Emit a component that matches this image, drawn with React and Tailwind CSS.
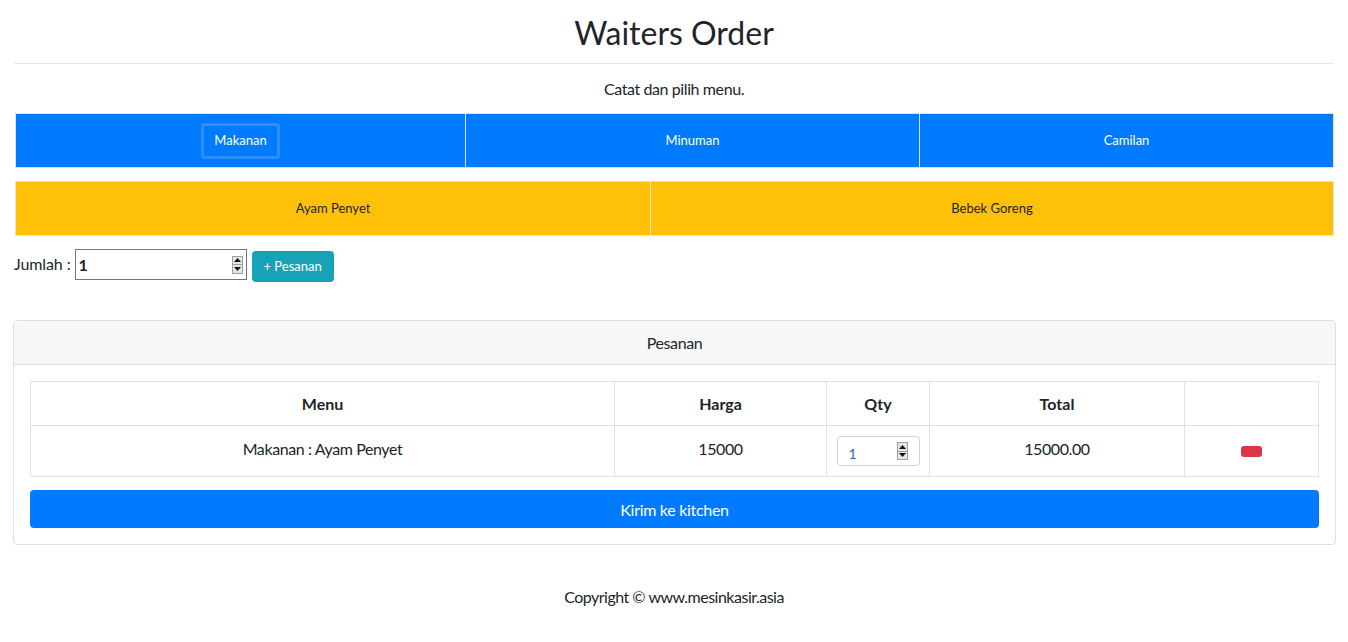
import React from "react";

function Spinner() {
  return (
    <div className="flex flex-col w-[11px] h-[18px] border border-[#a0a0a0] bg-[#e6e6e6]">
      <div className="flex-1 flex items-center justify-center border-b border-[#a0a0a0]">
        <svg width="7" height="4" viewBox="0 0 7 4"><polygon points="3.5,0 7,4 0,4" fill="#111" /></svg>
      </div>
      <div className="flex-1 flex items-center justify-center">
        <svg width="7" height="4" viewBox="0 0 7 4"><polygon points="0,0 7,0 3.5,4" fill="#111" /></svg>
      </div>
    </div>
  );
}

export default function App() {
  const font = { fontFamily: "Lato, 'Open Sans', sans-serif" };
  return (
    <div className="px-[14px] text-[#212529] bg-white min-h-[642px]" style={font}>
      <h2 className="text-center text-[32px] leading-[38px] pt-[14px] pb-[11px] font-normal">Waiters Order</h2>
      <div className="border-t border-[#e5e5e5]" />
      <p className="text-center text-[16px] leading-[24px] mt-[13px] tracking-[-0.4px]">Catat dan pilih menu.</p>
      <div className="mt-[12px] ml-[1px] flex h-[55px] border border-[#dee2e6] bg-[#007bff] text-white text-[13px]">
        <div className="w-[449px] flex items-center justify-center">
          <div className="px-[10px] h-[36px] flex items-center border-[3px] border-[#2e8fff] rounded-[4px]">Makanan</div>
        </div>
        <div className="w-[454px] flex items-center justify-center border-l border-[#dbe9ff]">Minuman</div>
        <div className="flex-1 flex items-center justify-center border-l border-[#dbe9ff]">Camilan</div>
      </div>
      <div className="mt-[13px] ml-[1px] flex h-[55px] border border-[#dee2e6] bg-[#ffc107] text-[#212529] text-[13px]">
        <div className="w-[634px] flex items-center justify-center">Ayam Penyet</div>
        <div className="flex-1 flex items-center justify-center border-l border-[#f3e7c2]">Bebek Goreng</div>
      </div>
      <div className="mt-[13px] flex items-start">
        <span className="text-[16px] leading-[30px] mr-[4px] tracking-[-0.1px]">Jumlah :</span>
        <div className="w-[172px] h-[31px] border border-[#767676] flex items-center justify-between pl-[3px] pr-[3px]">
          <span className="text-[16px] font-bold">1</span>
          <Spinner />
        </div>
        <button className="ml-[5px] mt-[2px] w-[82px] h-[31px] rounded-[4px] bg-[#17a2b8] text-white text-[13px]">+ Pesanan</button>
      </div>
      <div className="mt-[38px] -ml-[1px] -mr-[2px] border border-[#dfdfdf] rounded-[4px]">
        <div className="h-[44px] bg-[#f7f7f7] border-b border-[#dfdfdf] flex items-center justify-center text-[16px] tracking-[-0.4px]">Pesanan</div>
        <div className="p-[16px]">
          <div className="border border-[#dee2e6]">
            <div className="flex h-[44px] border-b border-[#dee2e6] font-bold text-[16px]">
              <div className="w-[583px] flex items-center justify-center">Menu</div>
              <div className="w-[212px] flex items-center justify-center border-l border-[#dee2e6]">Harga</div>
              <div className="w-[103px] flex items-center justify-center border-l border-[#dee2e6]">Qty</div>
              <div className="w-[255px] flex items-center justify-center border-l border-[#dee2e6]">Total</div>
              <div className="flex-1 border-l border-[#dee2e6]" />
            </div>
            <div className="flex h-[50px] text-[16px] tracking-[-0.4px]">
              <div className="w-[583px] flex items-center justify-center pb-[4px]">Makanan : Ayam Penyet</div>
              <div className="w-[212px] flex items-center justify-center border-l border-[#dee2e6] pb-[4px]">15000</div>
              <div className="w-[103px] flex items-center justify-center border-l border-[#dee2e6]">
                <div className="w-[83px] h-[30px] border border-[#ced4da] rounded-[4px] flex items-center justify-between pl-[11px] pr-[11px]">
                  <span className="text-[14px] text-[#2f6ea8] mt-[4px]">1</span>
                  <Spinner />
                </div>
              </div>
              <div className="w-[255px] flex items-center justify-center border-l border-[#dee2e6] pb-[4px]">15000.00</div>
              <div className="flex-1 flex items-center justify-center border-l border-[#dee2e6]">
                <div className="w-[21px] h-[11px] rounded-[3px] bg-[#dc3545]" />
              </div>
            </div>
          </div>
          <button className="mt-[13px] w-full h-[38px] rounded-[4px] bg-[#007bff] text-white text-[16px] tracking-[-0.3px] pt-[2px]">Kirim ke kitchen</button>
        </div>
      </div>
      <p className="text-center text-[16px] leading-[24px] mt-[40px] tracking-[-0.5px]">Copyright © www.mesinkasir.asia</p>
    </div>
  );
}
